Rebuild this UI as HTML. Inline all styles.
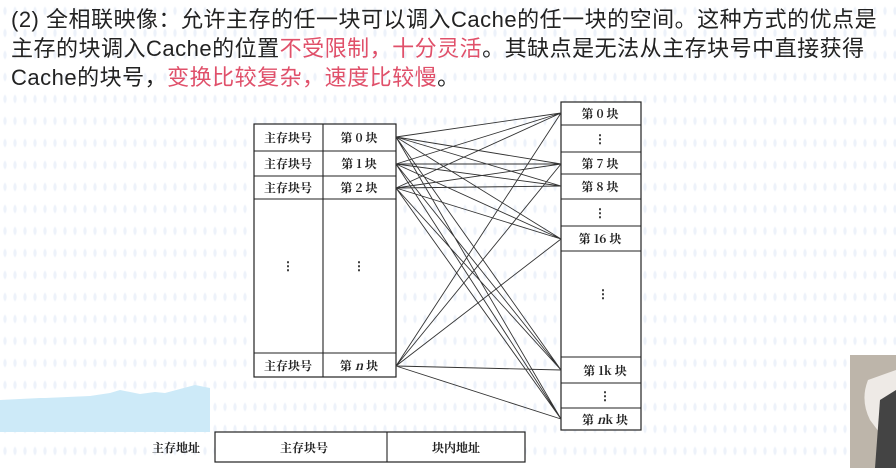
<!DOCTYPE html>
<html><head><meta charset="utf-8"><style>
body{margin:0;width:896px;height:468px;overflow:hidden;background:#fff;position:relative;
background-image:radial-gradient(ellipse 2px 5px at 50% 50%,#edf2fa 60%,transparent 100%);background-size:10px 22px;}
.t{position:absolute;left:11px;top:5px;font:22px/29px "Liberation Sans","Noto Sans CJK SC",sans-serif;letter-spacing:0.5px;color:#222;white-space:nowrap;}
.r{color:#e0506a}
svg{position:absolute;left:0;top:0}
svg text{font-family:"Noto Serif CJK SC","Liberation Serif",serif;font-size:12px;font-weight:bold;fill:#222;text-anchor:middle}
</style></head><body>
<div class="t">(2) 全相联映像：允许主存的任一块可以调入Cache的任一块的空间。这种方式的优点是<br>主存的块调入Cache的位置<span class="r">不受限制，十分灵活</span>。其缺点是无法从主存块号中直接获得<br>Cache的块号，<span class="r">变换比较复杂，速度比较慢</span>。</div>
<svg width="896" height="468">
<path d="M0 400 L40 398 L45 398 L90 396 L110 393 L120 390 L140 394 L155 392 L165 393 L195 385 L210 388 L210 432 L0 432Z" fill="#cdeaf8"/>
<rect x="850" y="355" width="46" height="113" fill="#bdb5aa"/>
<path d="M868 380 Q860 400 870 420 L885 440 L896 430 L896 370Z" fill="#eeeae6"/>
<path d="M880 400 L896 390 L896 468 L875 468Z" fill="#444"/>
<g fill="#fff" stroke="#222" stroke-width="1.2">
<rect x="254" y="124" width="142" height="253"/>
<rect x="561" y="102" width="80" height="328"/>
<rect x="215" y="432" width="310" height="30"/>
</g>
<g stroke="#222" stroke-width="1.1">
<line x1="323" y1="124" x2="323" y2="377"/>
<line x1="254" y1="151" x2="396" y2="151"/><line x1="254" y1="176" x2="396" y2="176"/>
<line x1="254" y1="199" x2="396" y2="199"/><line x1="254" y1="353" x2="396" y2="353"/>
<line x1="561" y1="125" x2="641" y2="125"/><line x1="561" y1="152" x2="641" y2="152"/>
<line x1="561" y1="174" x2="641" y2="174"/><line x1="561" y1="199" x2="641" y2="199"/>
<line x1="561" y1="226" x2="641" y2="226"/><line x1="561" y1="251" x2="641" y2="251"/>
<line x1="561" y1="357" x2="641" y2="357"/><line x1="561" y1="383" x2="641" y2="383"/>
<line x1="561" y1="408" x2="641" y2="408"/>
<line x1="387" y1="432" x2="387" y2="462"/>
</g>
<g stroke="#333" stroke-width="0.9">
<path d="M396 137L561 113M396 137L561 164M396 137L561 186M396 137L561 239M396 137L561 370M396 137L561 419
M396 164L561 113M396 164L561 164M396 164L561 186M396 164L561 239M396 164L561 370M396 164L561 419
M396 188L561 113M396 188L561 164M396 188L561 186M396 188L561 239M396 188L561 370M396 188L561 419
M396 366L561 113M396 366L561 164M396 366L561 239M396 366L561 370M396 366L561 419"/>
</g>
<g>
<text x="288" y="142">主存块号</text><text x="359" y="142">第 0 块</text>
<text x="288" y="168">主存块号</text><text x="359" y="168">第 1 块</text>
<text x="288" y="192">主存块号</text><text x="359" y="192">第 2 块</text>
<text x="288" y="270">⋮</text><text x="359" y="270">⋮</text>
<text x="288" y="370">主存块号</text><text x="359" y="370">第 <tspan font-style="italic">n</tspan> 块</text>
<text x="600" y="118">第 0 块</text><text x="600" y="143">⋮</text>
<text x="600" y="168">第 7 块</text><text x="600" y="191">第 8 块</text>
<text x="600" y="217">⋮</text><text x="600" y="243">第 16 块</text>
<text x="603" y="298">⋮</text><text x="605" y="375">第 1k 块</text>
<text x="605" y="400">⋮</text><text x="605" y="424">第 <tspan font-style="italic">n</tspan>k 块</text>
<text x="176" y="452">主存地址</text><text x="304" y="452">主存块号</text><text x="456" y="452">块内地址</text>
</g>
</svg>
</body></html>
